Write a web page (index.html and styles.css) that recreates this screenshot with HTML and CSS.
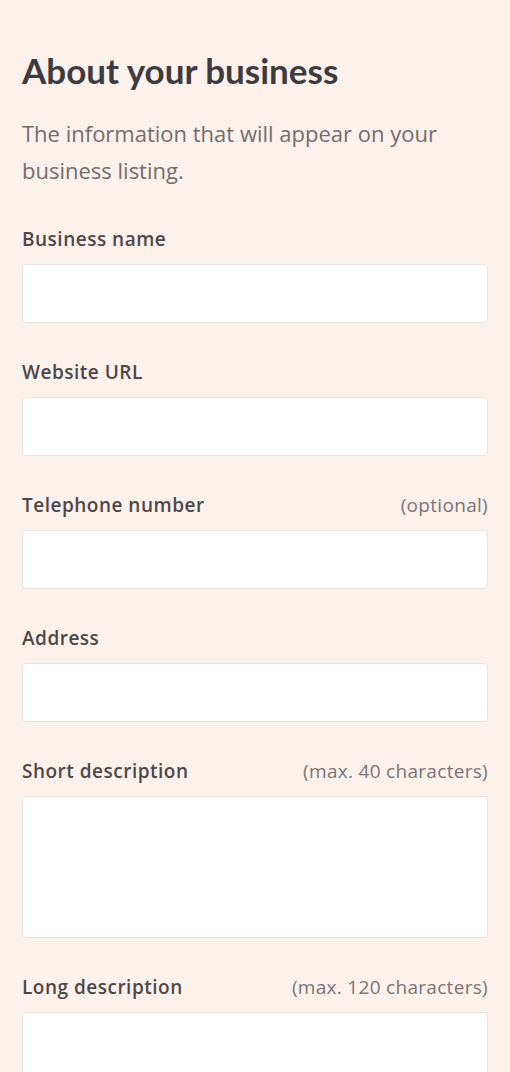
FILE: index.html
```html
<!DOCTYPE html>
<html lang="en">
<head>
    <meta charset="UTF-8">
    <meta name="viewport" content="width=device-width, initial-scale=1.0">
    <title>About your business</title>
    <link rel="stylesheet" href="styles.css">
</head>
<body>
    <form class="business-form">
        <h1 class="title">About your business</h1>
        <p class="intro">The information that will appear on your business listing.</p>

        <div class="field">
            <label class="field-label" for="name">Business name</label>
            <input class="field-input" type="text" id="name">
        </div>

        <div class="field">
            <label class="field-label" for="url">Website URL</label>
            <input class="field-input" type="text" id="url">
        </div>

        <div class="field">
            <label class="field-label" for="phone">Telephone number <span class="hint">(optional)</span></label>
            <input class="field-input" type="text" id="phone">
        </div>

        <div class="field">
            <label class="field-label" for="address">Address</label>
            <input class="field-input" type="text" id="address">
        </div>

        <div class="field">
            <label class="field-label" for="short">Short description <span class="hint">(max. 40 characters)</span></label>
            <textarea class="field-input field-area" id="short"></textarea>
        </div>

        <div class="field">
            <label class="field-label" for="long">Long description <span class="hint">(max. 120 characters)</span></label>
            <textarea class="field-input field-area" id="long"></textarea>
        </div>
    </form>
</body>
</html>
```

FILE: styles.css
```css
* {
    box-sizing: border-box;
    margin: 0;
    padding: 0;
    font-family: "Open Sans", Arial, sans-serif;
}

body {
    background-color: #fdf1ec;
    padding: 48px 22px 0;
}

.business-form {
    display: flex;
    flex-direction: column;
}

.title {
    font-family: Lato, "Open Sans", Arial, sans-serif;
    font-size: 35px;
    line-height: 44px;
    font-weight: 700;
    color: #3e3b40;
    margin-bottom: 23px;
}

.intro {
    font-size: 22px;
    line-height: 37px;
    color: #736d6d;
    margin-bottom: 39px;
}

.field {
    display: flex;
    flex-direction: column;
    margin-bottom: 38px;
}

.field-label {
    display: flex;
    justify-content: space-between;
    font-size: 19px;
    line-height: 22px;
    font-weight: 600;
    letter-spacing: 0.5px;
    color: #4d4749;
    margin-bottom: 14px;
}

.hint {
    font-weight: 400;
    letter-spacing: 0.3px;
    color: #7a7476;
}

.field-input {
    width: 100%;
    height: 59px;
    background-color: #fff;
    border: 1px solid #ece4e1;
    border-radius: 4px;
    font-size: 18px;
    padding: 0 14px;
    outline: none;
}

.field-area {
    height: 142px;
    resize: none;
    padding: 14px;
}
```
